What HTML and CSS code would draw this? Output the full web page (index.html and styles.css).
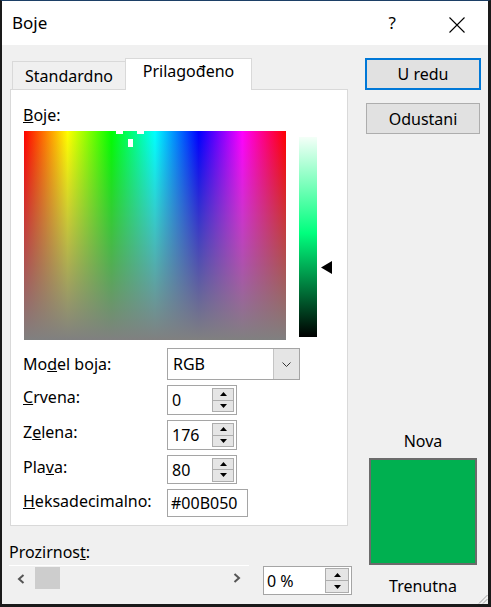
FILE: index.html
```html
<!DOCTYPE html>
<html lang="hr">
<head>
    <meta charset="UTF-8">
    <meta name="viewport" content="width=device-width, initial-scale=1.0">
    <title>Boje</title>
    <link rel="stylesheet" href="styles.css">
</head>
<body>
    <div class="window">
        <div class="titlebar">
            <span class="title">Boje</span>
            <span class="help">?</span>
            <svg class="close" width="16" height="16" viewBox="0 0 16 16">
                <path d="M0.5 0.5 L15.5 15.5 M15.5 0.5 L0.5 15.5" stroke="#000" stroke-width="1.1" fill="none"/>
            </svg>
        </div>

        <div class="main">
            <div class="left">
                <div class="tabs">
                    <div class="tab">Standardno</div>
                    <div class="tab active">Prilagođeno</div>
                </div>

                <div class="panel">
                    <div class="label"><u>B</u>oje:</div>
                    <div class="picker">
                        <div class="spectrum">
                            <span class="mark mark-l"></span>
                            <span class="mark mark-r"></span>
                            <span class="mark mark-c"></span>
                        </div>
                        <div class="lum">
                            <svg class="pointer" width="11" height="13" viewBox="0 0 11 13">
                                <polygon points="0,6.5 11,0 11,13" fill="#000"/>
                            </svg>
                        </div>
                    </div>

                    <div class="form">
                        <div class="label model-label">Mo<u>d</u>el boja:</div>
                        <div class="select">
                            <span>RGB</span>
                            <span class="drop">
                                <svg width="9" height="5" viewBox="0 0 9 5"><polyline points="0.5,0.5 4.5,4.5 8.5,0.5" stroke="#333" fill="none"/></svg>
                            </span>
                        </div>

                        <div class="label"><u>C</u>rvena:</div>
                        <div class="spin">
                            <span>0</span>
                            <span class="arrows">
                                <span class="up"><svg width="7" height="4" viewBox="0 0 7 4"><polygon points="3.5,0 7,4 0,4"/></svg></span>
                                <span class="down"><svg width="7" height="4" viewBox="0 0 7 4"><polygon points="0,0 7,0 3.5,4"/></svg></span>
                            </span>
                        </div>

                        <div class="label">Z<u>e</u>lena:</div>
                        <div class="spin">
                            <span>176</span>
                            <span class="arrows">
                                <span class="up"><svg width="7" height="4" viewBox="0 0 7 4"><polygon points="3.5,0 7,4 0,4"/></svg></span>
                                <span class="down"><svg width="7" height="4" viewBox="0 0 7 4"><polygon points="0,0 7,0 3.5,4"/></svg></span>
                            </span>
                        </div>

                        <div class="label">Pla<u>v</u>a:</div>
                        <div class="spin short">
                            <span>80</span>
                            <span class="arrows">
                                <span class="up"><svg width="7" height="4" viewBox="0 0 7 4"><polygon points="3.5,0 7,4 0,4"/></svg></span>
                                <span class="down"><svg width="7" height="4" viewBox="0 0 7 4"><polygon points="0,0 7,0 3.5,4"/></svg></span>
                            </span>
                        </div>

                        <div class="label"><u>H</u>eksadecimalno:</div>
                        <div class="hex">#00B050</div>
                    </div>
                </div>

                <div class="label alpha-label">Prozirnos<u>t</u>:</div>
                <div class="alpha-row">
                    <div class="slider">
                        <svg class="chev-l" width="8" height="10" viewBox="0 0 8 10"><polyline points="6.5,1 2,5 6.5,9" stroke="#555" stroke-width="2" fill="none"/></svg>
                        <span class="thumb"></span>
                        <svg class="chev-r" width="8" height="10" viewBox="0 0 8 10"><polyline points="1.5,1 6,5 1.5,9" stroke="#555" stroke-width="2" fill="none"/></svg>
                    </div>
                    <div class="spin pct">
                        <span>0 %</span>
                        <span class="arrows">
                            <span class="up"><svg width="7" height="4" viewBox="0 0 7 4"><polygon points="3.5,0 7,4 0,4"/></svg></span>
                            <span class="down"><svg width="7" height="4" viewBox="0 0 7 4"><polygon points="0,0 7,0 3.5,4"/></svg></span>
                        </span>
                    </div>
                </div>
            </div>

            <div class="right">
                <button class="btn default">U redu</button>
                <button class="btn cancel">Odustani</button>
                <div class="preview">
                    <div class="cap">Nova</div>
                    <div class="swatch"></div>
                    <div class="cap trenutna">Trenutna</div>
                </div>
            </div>
        </div>

        <svg class="grip" width="10" height="10" viewBox="0 0 10 10">
            <path d="M9.5 1 L1 9.5 M9.5 5 L5 9.5" stroke="#a0a0a0" fill="none"/>
        </svg>
    </div>
</body>
</html>
```

FILE: styles.css
```css
body {
    margin: 0;
    font-family: 'Noto Sans', 'DejaVu Sans', sans-serif;
}
.window {
    position: relative;
    width: 491px;
    height: 607px;
    box-sizing: border-box;
    border-style: solid;
    border-width: 1px 3px 3px 2px;
    border-color: #1c3f66 #1a1a1a #1a1a1a #1a1a1a;
    background: #f0f0f0;
    display: flex;
    flex-direction: column;
    font-size: 16px;
    line-height: 20px;
    color: #000;
}
.titlebar {
    height: 44px;
    flex-shrink: 0;
    background: #fff;
    display: flex;
    align-items: center;
    padding-left: 10px;
}
.title {
    font-size: 17px;
}
.help {
    margin-left: auto;
    font-size: 17px;
}
.close {
    margin: 4px 23px 0 53px;
}
.main {
    flex: 1;
    display: flex;
    padding: 13px 7px 0 7px;
}
.left {
    width: 343px;
    display: flex;
    flex-direction: column;
}
.tabs {
    height: 31px;
    display: flex;
    align-items: flex-end;
    padding-left: 3px;
}
.tab {
    width: 113px;
    height: 28px;
    box-sizing: border-box;
    border-top: 1px solid #d9d9d9;
    border-left: 1px solid #d9d9d9;
    display: flex;
    justify-content: center;
    padding-top: 4px;
}
.tab.active {
    position: relative;
    z-index: 1;
    width: 127px;
    height: 32px;
    margin-bottom: -1px;
    background: #fff;
    border-right: 1px solid #d9d9d9;
    padding-top: 2px;
}
.panel {
    margin-left: 1px;
    width: 338px;
    height: 437px;
    box-sizing: border-box;
    border: 1px solid #d9d9d9;
    background: #fff;
    padding: 13px 12px 0 12px;
}
.picker {
    display: flex;
    margin-top: 6px;
}
.spectrum {
    position: relative;
    margin-left: 1px;
    width: 262px;
    height: 209px;
    background:
        linear-gradient(to bottom, rgba(128,128,128,0), #808080),
        linear-gradient(to right, #f00, #ff0, #0f0, #0ff, #00f, #f0f, #f00);
}
.mark {
    position: absolute;
    background: #fff;
}
.mark-l {
    left: 92px;
    top: 0;
    width: 7px;
    height: 3px;
}
.mark-r {
    left: 113px;
    top: 0;
    width: 7px;
    height: 3px;
}
.mark-c {
    left: 104px;
    top: 8px;
    width: 5px;
    height: 8px;
}
.lum {
    position: relative;
    width: 18px;
    height: 200px;
    margin: 6px 0 0 13px;
    background: linear-gradient(to bottom, #f4fff8, #00ff7e 48%, #000);
}
.pointer {
    position: absolute;
    left: 22px;
    top: 124px;
}
.form {
    display: grid;
    grid-template-columns: 144px auto;
    row-gap: 5px;
    justify-items: start;
    align-items: start;
    margin-top: 8px;
}
.label {
    padding-top: 2px;
}
.model-label {
    padding-top: 6px;
}
.select {
    width: 133px;
    height: 32px;
    box-sizing: border-box;
    border: 1px solid #a5a5a5;
    display: flex;
    align-items: center;
    padding-left: 5px;
}
.drop {
    margin-left: auto;
    width: 25px;
    height: 100%;
    background: #e5e5e5;
    border-left: 1px solid #c4c4c4;
    display: flex;
    align-items: center;
    justify-content: center;
}
.spin {
    width: 70px;
    height: 30px;
    box-sizing: border-box;
    border: 1px solid #a5a5a5;
    background: #fff;
    display: flex;
    align-items: center;
    padding-left: 4px;
}
.spin.short {
    height: 29px;
}
.arrows {
    margin-left: auto;
    margin-right: 2px;
    width: 22px;
    height: 24px;
    box-sizing: border-box;
    border: 1px solid #adadad;
    background: #e5e5e5;
    display: flex;
    flex-direction: column;
}
.arrows span {
    flex: 1;
    display: flex;
    align-items: center;
    justify-content: center;
}
.arrows .up {
    border-bottom: 1px solid #adadad;
}
.arrows svg {
    fill: #000;
}
.hex {
    width: 81px;
    height: 28px;
    box-sizing: border-box;
    border: 1px solid #a5a5a5;
    padding-left: 3px;
    display: flex;
    align-items: center;
}
.alpha-label {
    margin-top: 16px;
    padding-top: 0;
}
.alpha-row {
    display: flex;
    margin-top: 3px;
}
.slider {
    width: 240px;
    height: 26px;
    box-sizing: border-box;
    border-top: 1px solid #fff;
    display: flex;
    align-items: flex-start;
    padding-top: 1px;
}
.chev-l {
    margin: 7px 0 0 8px;
}
.thumb {
    width: 25px;
    height: 22px;
    margin-left: 10px;
    background: #cdcdcd;
}
.chev-r {
    margin: 6px 8px 0 auto;
}
.spin.pct {
    width: 89px;
    height: 29px;
    margin: 1px 0 0 14px;
    padding-left: 3px;
}
.spin.pct .arrows {
    width: 24px;
    height: 25px;
}
.right {
    width: 116px;
    margin-left: 13px;
    display: flex;
    flex-direction: column;
    padding-bottom: 8px;
}
.btn {
    font: inherit;
    color: #000;
    width: 116px;
    height: 32px;
    box-sizing: border-box;
    background: #e1e1e1;
    border: 1px solid #adadad;
    padding: 0;
}
.btn.default {
    border: 2px solid #0078d7;
}
.btn.cancel {
    width: 114px;
    height: 31px;
    margin: 13px 0 0 1px;
}
.preview {
    margin-top: auto;
    display: flex;
    flex-direction: column;
    align-items: center;
}
.swatch {
    width: 108px;
    height: 107px;
    box-sizing: border-box;
    margin-top: 7px;
    border: 2px solid #6b6b6b;
    background: #00b050;
}
.trenutna {
    margin-top: 11px;
}
.grip {
    position: absolute;
    right: 0;
    bottom: 0;
}
```
